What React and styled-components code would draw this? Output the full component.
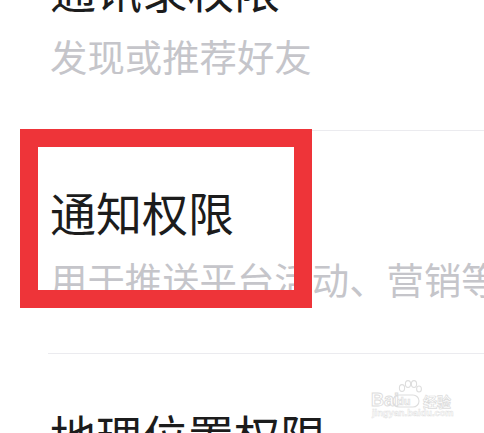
import React from "react";
import styled, { createGlobalStyle } from "styled-components";

const Global = createGlobalStyle`
  html, body { margin: 0; padding: 0; background: #ffffff; }
  body { font-family: "Noto Sans CJK SC", "Noto Sans", sans-serif; }
`;

const Page = styled.div`
  position: relative;
  width: 484px;
  height: 433px;
  overflow: hidden;
  background: #ffffff;
`;

const List = styled.div`
  display: flex;
  flex-direction: column;
  margin-top: -92px;
`;

const Row = styled.div`
  display: flex;
  flex-direction: column;
  margin-left: 48px;
  padding: 57px 0 55px 2px;
  border-bottom: 1px solid #ebebef;
  white-space: nowrap;
`;

const Title = styled.div`
  font-size: 46px;
  line-height: 46px;
  color: #1c1c1c;
`;

const Sub = styled.div`
  margin-top: 27px;
  font-size: 37.4px;
  line-height: 37px;
  color: #c5c5ca;
`;

const Highlight = styled.div`
  position: absolute;
  left: 20px;
  top: 129px;
  width: 256px;
  height: 143px;
  border: 18px solid #ee3439;
`;

const Watermark = styled.div`
  position: absolute;
  left: 364px;
  top: 376px;
  width: 96px;
  height: 44px;
`;

const Logo = styled.svg`
  display: block;
`;

const items = [
  { title: "通讯录权限", sub: "发现或推荐好友" },
  { title: "通知权限", sub: "用于推送平台活动、营销等" },
  { title: "地理位置权限", sub: "用于推荐附近的内容" },
];

export default function App() {
  return (
    <Page>
      <Global />
      <List>
        {items.map((it) => (
          <Row key={it.title}>
            <Title>{it.title}</Title>
            <Sub>{it.sub}</Sub>
          </Row>
        ))}
      </List>
      <Highlight />
      <Watermark>
        <Logo width="96" height="44" viewBox="0 0 96 44">
          <g fill="#ffffff" stroke="#dedede" strokeWidth="1.1">
            <ellipse cx="38" cy="12" rx="2.6" ry="3.4" />
            <ellipse cx="44" cy="8" rx="2.6" ry="3.4" />
            <ellipse cx="50" cy="8" rx="2.6" ry="3.4" />
            <ellipse cx="55" cy="13" rx="2.4" ry="3" />
            <rect x="29" y="19" width="26" height="12" rx="6" />
          </g>
          <text x="7" y="30" fontFamily="Liberation Sans, sans-serif" fontSize="18" fontWeight="700"
            fill="#ffffff" stroke="#dcdcdc" strokeWidth="0.9">Bai</text>
          <text x="33" y="29" fontFamily="Liberation Sans, sans-serif" fontSize="11" fontWeight="700"
            fill="#ffffff" stroke="#dcdcdc" strokeWidth="0.7">du</text>
          <text x="59" y="31" fontFamily="Noto Sans CJK SC, sans-serif" fontSize="14" fontWeight="700"
            fill="#ffffff" stroke="#dcdcdc" strokeWidth="0.7">经验</text>
          <text x="8" y="40" fontFamily="Liberation Sans, sans-serif" fontSize="9.3" fontWeight="700"
            fill="#ffffff" stroke="#e2e2e2" strokeWidth="0.5">jingyan.baidu.com</text>
        </Logo>
      </Watermark>
    </Page>
  );
}
